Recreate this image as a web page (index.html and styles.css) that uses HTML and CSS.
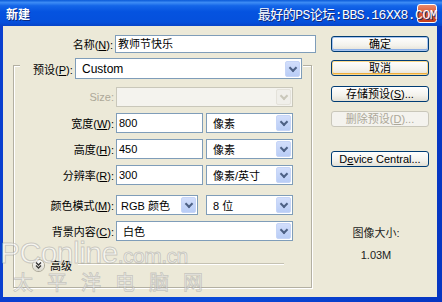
FILE: index.html
```html
<!DOCTYPE html>
<html lang="zh-CN">
<head>
<meta charset="UTF-8">
<title>新建</title>
<link rel="stylesheet" href="styles.css">
</head>
<body>
<div class="window">
    <div class="titlebar">
        <span class="title">新建</span>
        <span class="close-btn"></span>
        <span class="brand">最好的PS论坛:BBS.16XX8.COM</span>
    </div>
    <div class="dialog">
        <div class="form">
            <div class="name-row">
                <span class="lbl">名称(<u>N</u>):</span>
                <div class="field name-field">教师节快乐</div>
            </div>
            <div class="group">
                <div class="preset-row">
                    <span class="preset-lbl">预设(<u>P</u>):</span>
                    <div class="combo preset"><span>Custom</span><i class="arrow"></i></div>
                </div>
                <div class="row first">
                    <span class="lbl off">Size:</span>
                    <div class="combo full off"><span></span><i class="arrow"></i></div>
                </div>
                <div class="row">
                    <span class="lbl">宽度(<u>W</u>):</span>
                    <div class="field half">800</div>
                    <div class="combo half"><span>像素</span><i class="arrow"></i></div>
                </div>
                <div class="row">
                    <span class="lbl">高度(<u>H</u>):</span>
                    <div class="field half">450</div>
                    <div class="combo half"><span>像素</span><i class="arrow"></i></div>
                </div>
                <div class="row">
                    <span class="lbl">分辨率(<u>R</u>):</span>
                    <div class="field half">300</div>
                    <div class="combo half"><span>像素/英寸</span><i class="arrow"></i></div>
                </div>
                <div class="row mode">
                    <span class="lbl">颜色模式(<u>M</u>):</span>
                    <div class="combo mode-sel"><span>RGB 颜色</span><i class="arrow"></i></div>
                    <div class="combo half"><span>8 位</span><i class="arrow"></i></div>
                </div>
                <div class="row">
                    <span class="lbl">背景内容(<u>C</u>):</span>
                    <div class="combo full"><span>白色</span><i class="arrow"></i></div>
                </div>
                <div class="advanced">
                    <span class="adv-icon"><svg width="11" height="11" viewBox="0 0 11 11"><path d="M3 2.5 L5.5 5 L8 2.5 M3 5.5 L5.5 8 L8 5.5" fill="none" stroke="#333" stroke-width="1.3"/></svg></span>
                    <span class="adv-text">高级</span>
                    <span class="rule"></span>
                </div>
            </div>
        </div>
        <div class="side">
            <div class="btn default">确定</div>
            <div class="btn hot">取消</div>
            <div class="btn save">存储预设(<u>S</u>)...</div>
            <div class="btn del off">删除预设(<u>D</u>)...</div>
            <div class="btn device">D<u>e</u>vice Central...</div>
            <div class="info">图像大小:</div>
            <div class="info size">1.03M</div>
        </div>
    </div>
    <div class="watermark">
        <div class="wm-en">PConline<span class="wm-dom">.com.cn</span></div>
        <div class="wm-cn">太平洋电脑网</div>
    </div>
</div>
</body>
</html>
```

FILE: styles.css
```css
body{
    margin:0;
}
.window{
    width:442px;
    height:302px;
    display:flex;
    flex-direction:column;
    background:linear-gradient(90deg, #0a3fcf, #0a4ad8 50%, #0636c2);
    position:relative;
    overflow:hidden;
    font-family:"Liberation Sans", "Noto Sans CJK SC", sans-serif;
    font-size:11px;
    color:#000;
}
.titlebar{
    height:26px;
    flex:none;
    display:flex;
    align-items:center;
    justify-content:space-between;
    padding:0 5px 0 6px;
    background:linear-gradient(#0a5ad8 0%, #3d8cf5 10%, #1466e8 22%, #0553e0 45%, #0550dc 85%, #0744c8 100%);
    position:relative;
    color:#fff;
}
.title{
    font-family:"Noto Sans CJK SC", sans-serif;
    font-weight:bold;
    font-size:12px;
    text-shadow:1px 1px 0 #0a2a80;
}
.brand{
    position:relative;
    z-index:1;
    font-family:"Liberation Mono", "Noto Sans CJK SC", monospace;
    font-size:13px;
    letter-spacing:-0.5px;
    text-shadow:1px 1px 0 #1a2a70;
}
.close-btn{
    position:absolute;
    right:5px;
    top:4px;
    width:18px;
    height:17px;
    border:1px solid #fff;
    border-radius:3px;
    background:linear-gradient(#e98a6b, #d9552f 50%, #c23d1c);
}
.dialog{
    flex:1;
    margin:0 5px 5px 3px;
    background:#ece9d8;
    display:flex;
}
.form{
    width:328px;
    padding-top:9px;
}
.name-row{
    display:flex;
    align-items:center;
}
.name-row .lbl{
    width:110px;
    text-align:right;
    margin-right:2px;
}
.field{
    height:18px;
    box-sizing:border-box;
    border:1px solid #7f9db9;
    background:#fff;
    padding-left:2px;
    line-height:16px;
}
.name-field{
    width:201px;
}
.group{
    margin:12px 0 0 10px;
    width:299px;
    height:223px;
    box-sizing:border-box;
    border:1px solid #b3b0a2;
    box-shadow:inset 1px 1px 0 #fff, 1px 1px 0 #fff;
}
.preset-row{
    margin:-8px 0 0 6px;
    width:283px;
    height:21px;
    display:flex;
    align-items:center;
    background:#ece9d8;
}
.preset-lbl{
    width:55px;
    padding-left:13px;
    box-sizing:border-box;
}
.combo{
    height:20px;
    box-sizing:border-box;
    border:1px solid #7f9db9;
    background:#fff;
    display:flex;
    align-items:center;
    justify-content:space-between;
    padding:0 1px 0 6px;
}
.combo.preset{
    width:227px;
    height:21px;
    font-size:12px;
}
.arrow{
    width:15px;
    height:16px;
    box-sizing:border-box;
    border:1px solid #c6d5f7;
    border-radius:2px;
    background:linear-gradient(#d2defb, #b9cdf6);
    display:flex;
    justify-content:center;
    padding-top:3px;
}
.arrow::after{
    content:"";
    width:4px;
    height:4px;
    border-right:2px solid #4d6185;
    border-bottom:2px solid #4d6185;
    transform:rotate(45deg);
}
.row{
    display:flex;
    align-items:center;
    height:20px;
    margin-top:6px;
}
.row.first{
    margin-top:8px;
}
.row.mode{
    margin-top:10px;
}
.row .lbl{
    width:100px;
    text-align:right;
    margin-right:2px;
}
.row .field{
    height:20px;
    line-height:18px;
}
.half{
    width:87px;
}
.row .half + .half{
    margin-left:3px;
}
.mode-sel{
    width:82px;
    padding-left:4px;
}
.mode-sel + .half{
    margin-left:8px;
}
.full{
    width:177px;
}
.off{
    color:#aca899;
}
.combo.off{
    background:#f4f3ee;
    border-color:#c9c7ba;
}
.combo.off .arrow{
    background:#f0efea;
    border-color:#e4e2da;
}
.combo.off .arrow::after{
    border-color:#c9c7ba;
}
.advanced{
    display:flex;
    align-items:center;
    height:14px;
    margin:17px 27px 0 19px;
}
.adv-icon{
    width:11px;
    height:11px;
    border-radius:50%;
    background:linear-gradient(#fff, #d8d6cc);
    box-shadow:0 0 0 1px #a8a596;
    display:flex;
}
.adv-text{
    margin-left:6px;
}
.rule{
    flex:1;
    margin:0 0 3px 6px;
    border-top:1px solid #c5c2b2;
    border-bottom:1px solid #fff;
}
.side{
    width:98px;
    padding-top:10px;
    display:flex;
    flex-direction:column;
}
.btn{
    height:16px;
    box-sizing:border-box;
    border:1px solid #003c74;
    border-radius:3px;
    background:linear-gradient(#fff, #f3f2ec 60%, #e3e0d5);
    text-align:center;
    line-height:14px;
    font-size:11px;
}
.btn.default{
    box-shadow:inset 0 0 0 1px #a8c4ef, inset 0 -1px 0 1px #8aaee6;
}
.btn.hot{
    margin-top:8px;
    box-shadow:inset 0 0 0 1px #fbd98c, inset 0 -1px 0 1px #efad3c;
}
.btn.save{
    margin-top:10px;
}
.btn.del{
    margin-top:9px;
    border-color:#c9c7ba;
    background:#f4f3ee;
}
.btn.device{
    margin-top:24px;
}
.info{
    margin-top:60px;
    padding-right:8px;
    text-align:center;
    line-height:13px;
    color:#222;
}
.info.size{
    margin-top:9px;
}
.watermark{
    position:absolute;
    left:0;
    top:238px;
    color:rgba(255, 255, 255, 0.6);
    -webkit-text-stroke:1px rgba(140, 140, 140, 0.4);
    pointer-events:none;
}
.wm-en{
    font-family:"Liberation Sans", sans-serif;
    font-size:30px;
    line-height:30px;
    letter-spacing:-0.5px;
}
.wm-dom{
    font-size:21px;
}
.wm-cn{
    margin-left:13px;
    font-family:"Noto Sans CJK SC", sans-serif;
    font-size:20px;
    line-height:22px;
    letter-spacing:14px;
}
```
